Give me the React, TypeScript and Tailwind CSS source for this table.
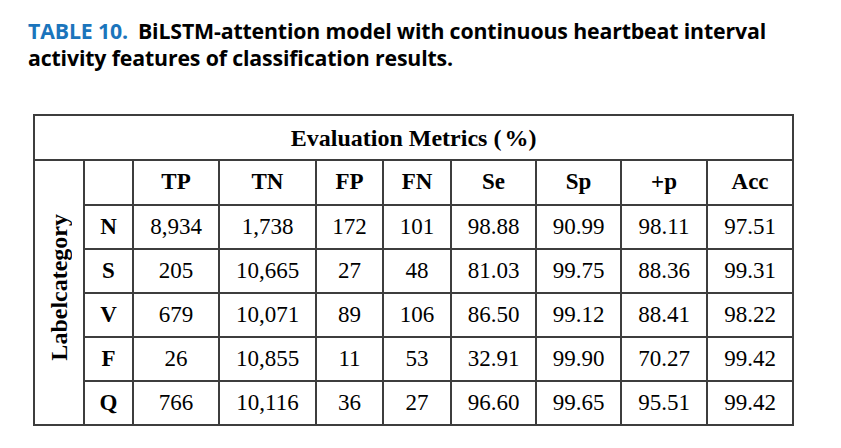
export default function App() {
  const columns = ["TP", "TN", "FP", "FN", "Se", "Sp", "+p", "Acc"];
  const rows = [
    { label: "N", values: ["8,934", "1,738", "172", "101", "98.88", "90.99", "98.11", "97.51"] },
    { label: "S", values: ["205", "10,665", "27", "48", "81.03", "99.75", "88.36", "99.31"] },
    { label: "V", values: ["679", "10,071", "89", "106", "86.50", "99.12", "88.41", "98.22"] },
    { label: "F", values: ["26", "10,855", "11", "53", "32.91", "99.90", "70.27", "99.42"] },
    { label: "Q", values: ["766", "10,116", "36", "27", "96.60", "99.65", "95.51", "99.42"] },
  ];

  const cell = "border-r-2 border-b-2 border-[#3d3d3d] text-center align-middle p-0";

  return (
    <div className="w-[841px] h-[448px] bg-white pl-[28px] pt-[17px]">
      {/* Caption */}
      <p className="w-[800px] font-['Open_Sans',sans-serif] font-bold text-[21.3px] leading-[27px] text-black tracking-[-0.15px]">
        <span className="text-[#1b75bc]">TABLE 10.</span>
        <span className="ml-[10px]">BiLSTM-attention model with continuous heartbeat interval</span>
        <br />
        activity features of classification results.
      </p>

      {/* Table */}
      <table className="mt-[43px] ml-[5px] w-[761px] border-separate border-spacing-0 border-l-2 border-t-2 border-[#3d3d3d] font-['Liberation_Serif',serif] text-[23px] text-black table-fixed">
        <colgroup>
          <col className="w-[50px]" />
          <col className="w-[49px]" />
          <col className="w-[86px]" />
          <col className="w-[97px]" />
          <col className="w-[67px]" />
          <col className="w-[68px]" />
          <col className="w-[85px]" />
          <col className="w-[85px]" />
          <col className="w-[86px]" />
          <col className="w-[86px]" />
        </colgroup>
        <tbody>
          <tr>
            <td colSpan={10} className={`${cell} h-[45px] font-bold text-[24px]`}>
              Evaluation Metrics (<span className="ml-[3px]">%</span>)
            </td>
          </tr>
          <tr>
            <td rowSpan={6} className={cell}>
              <div className="flex items-center justify-center pb-[10px]">
                <span className="[writing-mode:vertical-rl] rotate-180 font-bold text-[24px] leading-none">
                  Labelcategory
                </span>
              </div>
            </td>
            <td className={`${cell} h-[45px]`}></td>
            {columns.map((c) => (
              <td key={c} className={`${cell} font-bold`}>
                {c}
              </td>
            ))}
          </tr>
          {rows.map((r) => (
            <tr key={r.label}>
              <td className={`${cell} h-[44px] font-bold`}>{r.label}</td>
              {r.values.map((v, i) => (
                <td key={i} className={cell}>
                  {v}
                </td>
              ))}
            </tr>
          ))}
        </tbody>
      </table>
    </div>
  );
}
